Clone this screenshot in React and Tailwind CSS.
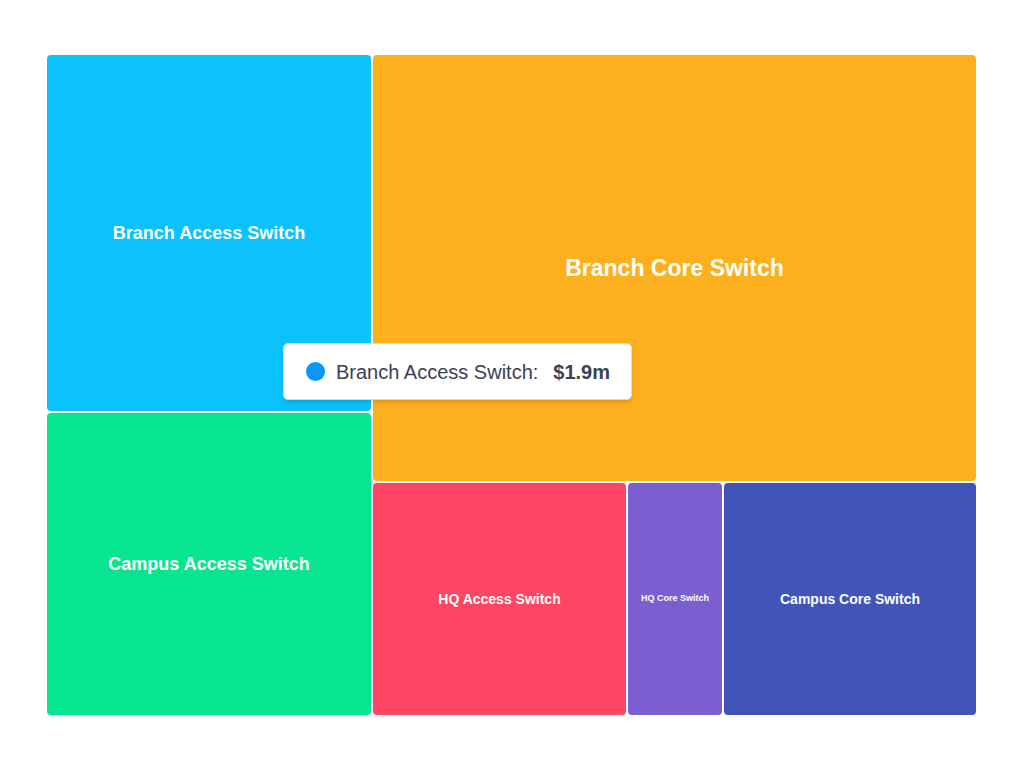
export default function App() {
  const label = "flex items-center justify-center rounded-[4px] font-bold text-white text-center";
  return (
    <div className="relative h-[765px] w-[1012px] bg-white pl-[47px] pt-[55px]" style={{ fontFamily: '"Liberation Sans", Arial, sans-serif' }}>
      <div className="flex h-[660px] w-[929px] gap-[2px]">
        <div className="flex w-[324px] flex-col gap-[2px]">
          <div className={`${label} h-[356px] bg-[#0bc2fd] text-[18px]`}>Branch Access Switch</div>
          <div className={`${label} flex-1 bg-[#07e591] text-[18px]`}>Campus Access Switch</div>
        </div>
        <div className="flex flex-1 flex-col gap-[2px]">
          <div className={`${label} h-[426px] bg-[#fdb01e] text-[23px]`}>Branch Core Switch</div>
          <div className="flex flex-1 gap-[2px]">
            <div className={`${label} w-[253px] bg-[#fe4563] text-[14px]`}>HQ Access Switch</div>
            <div className={`${label} w-[94px] bg-[#7b5ecf] text-[9px]`}>HQ Core Switch</div>
            <div className={`${label} flex-1 bg-[#4155b8] text-[14px]`}>Campus Core Switch</div>
          </div>
        </div>
      </div>
      <div className="absolute left-[283px] top-[343px] flex h-[57px] w-[349px] items-center gap-[11px] rounded-[5px] border border-[#d9d9d9] bg-white pl-[22px] text-[20px] text-[#3a4254] shadow-md">
        <span className="h-[19px] w-[19px] rounded-full bg-[#0a95ff]" />
        <span>Branch Access Switch:</span>
        <span className="ml-[4px] font-bold">$1.9m</span>
      </div>
    </div>
  );
}
